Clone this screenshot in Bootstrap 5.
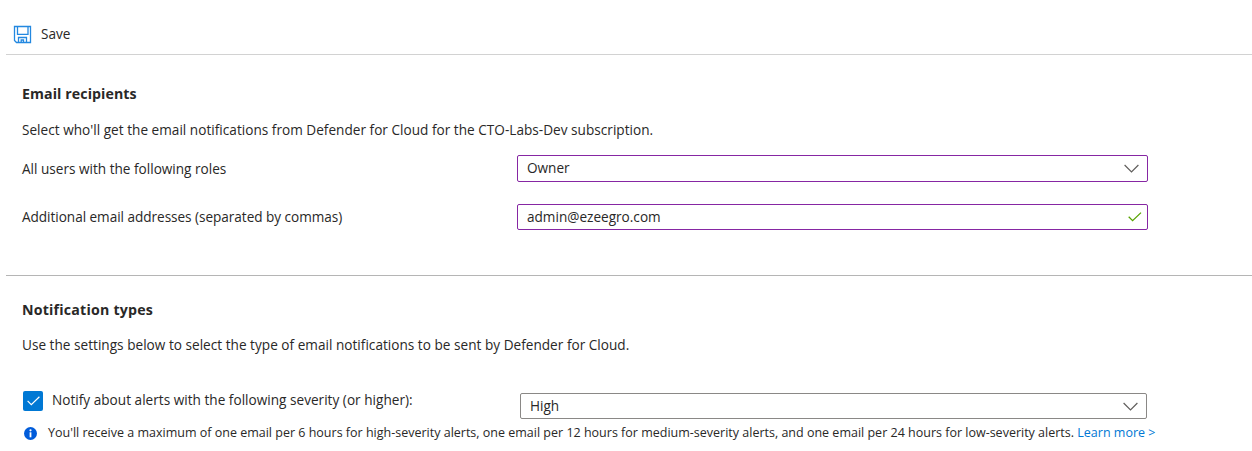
<!DOCTYPE html>
<html lang="en">
<head>
<meta charset="utf-8">
<meta name="viewport" content="width=device-width, initial-scale=1">
<title>Email notifications</title>
<link href="https://cdn.jsdelivr.net/npm/bootstrap@5.3.0/dist/css/bootstrap.min.css" rel="stylesheet">
<style>
body{font-family:"Open Sans","Noto Sans",sans-serif;font-size:13.6px;line-height:20px;color:#292827;background:#fff;height:451px;overflow:hidden}
.toolbar{height:55px;margin-left:6px;padding:14px 0 0 7px;border-bottom:1px solid #d2d2d2}
.save-btn{height:40px;gap:9px;font-size:13.6px;color:inherit}
.section-one{height:221px;margin-left:6px;padding:29px 0 0 16px;border-bottom:1px solid #b5b5b5}
.section-two{margin-left:6px;padding:24px 0 0 16px}
.heading{font-size:14.2px;line-height:20px;font-weight:700;margin:0;letter-spacing:.08px}
.heading.types{letter-spacing:.2px}
.intro{margin:16px 0 0;letter-spacing:.018px}
.form-line{height:27px}
.caption{width:495px;flex:none}
.addresses{letter-spacing:-.04px}
.field{width:631px;height:27px;border:1px solid #8626a3;border-radius:2px;padding:0 8px 0 9px;line-height:18px}
.field.roles{padding-bottom:1px}
.field.email{height:26px;padding-right:5px}
.field.severity{width:627px;height:26px;border-color:#8a8886}
.tick-box{width:20px;height:20px;background:#0078d4;border-radius:2px;flex:none}
.severity-label{margin:-1px 0 0 9px;letter-spacing:.015px}
.note{font-size:12.5px;line-height:18px;height:18px;white-space:nowrap}
.note span{margin-left:11px}
.note a{color:#0078d4}
svg{display:block;flex:none}
</style>
</head>
<body>
<header class="toolbar">
  <button class="save-btn btn p-0 border-0 d-flex align-items-center" type="button">
    <svg width="19" height="19" viewBox="0 0 19 19" fill="none" stroke="#2388e0" stroke-width="1.3"><path d="M1.5 1.5h16v16H3.5l-2-2zM4.5 1.5v7.8h10.5V1.5M5.5 17.5v-5h8v5M8.2 17.5v-2.5h2.3v2.5"/></svg>
    <span>Save</span>
  </button>
</header>
<main>
  <section class="section-one">
    <h2 class="heading">Email recipients</h2>
    <p class="intro">Select who'll get the email notifications from Defender for Cloud for the CTO-Labs-Dev subscription.</p>
    <div class="form-line d-flex align-items-center" style="margin-top:15px">
      <label class="caption">All users with the following roles</label>
      <div class="field roles d-flex align-items-center justify-content-between" role="combobox"><span>Owner</span>
        <svg width="15" height="9" viewBox="0 0 15 9" fill="none" stroke="#605e5c" stroke-width="1.2"><path d="M.6 1 7.5 7.9 14.4 1"/></svg>
      </div>
    </div>
    <div class="form-line d-flex align-items-center" style="margin-top:21px">
      <label class="caption addresses">Additional email addresses (separated by commas)</label>
      <div class="field email d-flex align-items-center justify-content-between"><span>admin@ezeegro.com</span>
        <svg width="14" height="10" viewBox="0 0 14 10" fill="none" stroke="#57a300" stroke-width="1.3"><path d="M.7 4.8 4.6 8.7 13 .6"/></svg>
      </div>
    </div>
  </section>
  <section class="section-two">
    <h2 class="heading types">Notification types</h2>
    <p class="intro" style="margin-top:15px">Use the settings below to select the type of email notifications to be sent by Defender for Cloud.</p>
    <div class="d-flex" style="margin-top:36px;height:28px;padding-left:1px">
      <div class="d-flex" style="width:497px">
        <span class="tick-box d-flex align-items-center justify-content-center" role="checkbox" aria-checked="true"><svg width="13" height="10" viewBox="0 0 13 10" fill="none" stroke="#fff" stroke-width="1.2"><path d="M.6 4.8 4.3 8.6 12.4.7"/></svg></span>
        <label class="severity-label">Notify about alerts with the following severity (or higher):</label>
      </div>
      <div class="field severity d-flex align-items-center justify-content-between mt-auto" role="combobox"><span>High</span>
        <svg width="15" height="9" viewBox="0 0 15 9" fill="none" stroke="#605e5c" stroke-width="1.2"><path d="M.6 1 7.5 7.9 14.4 1"/></svg>
      </div>
    </div>
    <div class="note d-flex align-items-center" style="margin-top:5px;padding-left:2px">
      <svg width="13" height="13" viewBox="0 0 13 13"><circle cx="6.5" cy="6.5" r="6.5" fill="#015cda"/><circle cx="6.5" cy="3.3" r="1.1" fill="#fff"/><path d="M5.6 5.3h1.8v5H5.6z" fill="#fff"/></svg>
      <span>You'll receive a maximum of one email per 6 hours for high-severity alerts, one email per 12 hours for medium-severity alerts, and one email per 24 hours for low-severity alerts. <a href="#" class="text-decoration-none">Learn more &gt;</a></span>
    </div>
  </section>
</main>
<script src="https://cdn.jsdelivr.net/npm/bootstrap@5.3.0/dist/js/bootstrap.bundle.min.js"></script>
</body>
</html>
